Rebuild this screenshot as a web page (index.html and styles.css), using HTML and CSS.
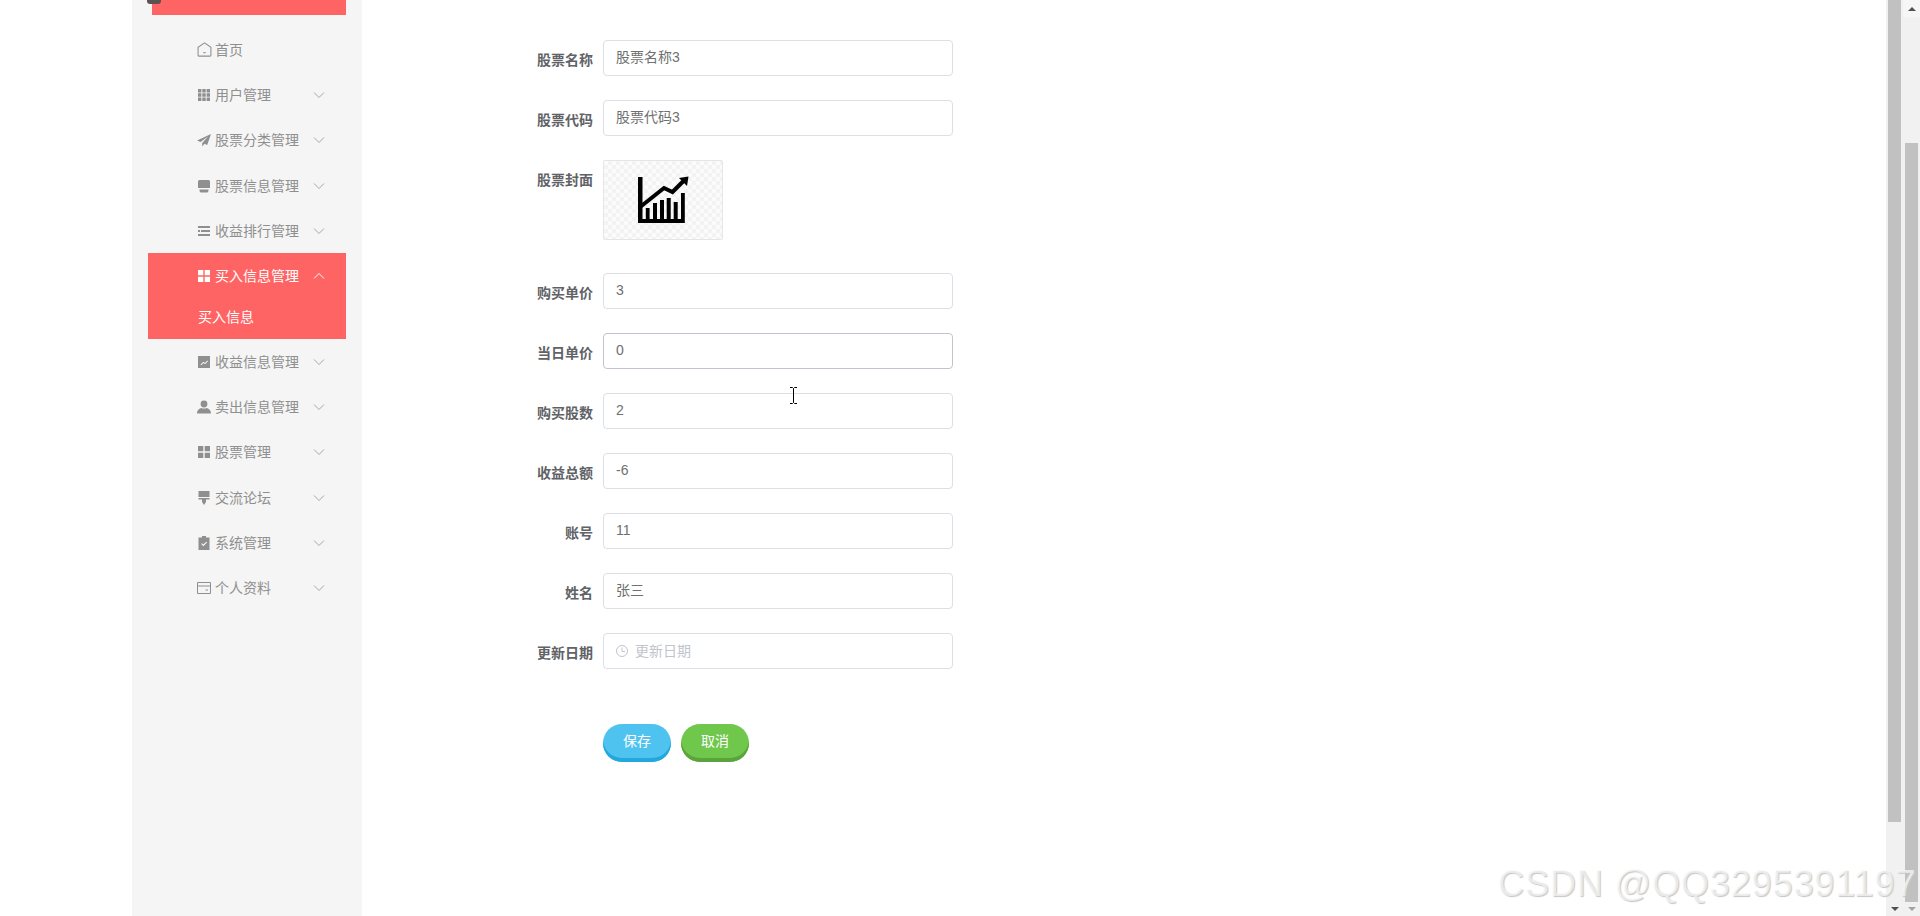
FILE: index.html
```html
<!DOCTYPE html>
<html lang="zh-CN">
<head>
<meta charset="utf-8">
<title>买入信息</title>
<link rel="stylesheet" href="styles.css">
</head>
<body>
<div class="app">
  <aside class="sidebar">
    <div class="side-head"><span class="avatar"></span></div>
    <ul class="menu">
      <li class="item">
        <svg class="ico ico-home" viewBox="0 0 14 14"><path d="M7 .8 1 5v7.400c0 .5.3.8.8.8h10.400c.5 0 .8-.3.8-.8V5z" fill="none" stroke="currentColor" stroke-width="1"/><path d="M5.800 10h2.400" stroke="currentColor" fill="none"/></svg>
        <span class="txt">首页</span>
      </li>
      <li class="item">
        <svg class="ico" viewBox="0 0 14 14"><path d="M1 1h3.400v3.400H1zM5.300 1h3.400v3.400H5.300zM9.600 1H13v3.400H9.600zM1 5.300h3.400v3.400H1zM5.300 5.300h3.400v3.400H5.300zM9.600 5.300H13v3.400H9.600zM1 9.600h3.400V13H1zM5.300 9.600h3.400V13H5.300zM9.600 9.600H13V13H9.600z" fill="currentColor"/></svg>
        <span class="txt">用户管理</span>
        <svg class="chev" viewBox="0 0 12 12"><path d="M1 3.500 6 8.500l5-5" fill="none" stroke="currentColor"/></svg>
      </li>
      <li class="item">
        <svg class="ico" viewBox="0 0 14 14"><path d="M14 1 0 7.500l3.500 1.600L11 3.500 5.200 10v3.500l2.300-2.700 2.700 1.200z" fill="currentColor"/></svg>
        <span class="txt">股票分类管理</span>
        <svg class="chev" viewBox="0 0 12 12"><path d="M1 3.500 6 8.500l5-5" fill="none" stroke="currentColor"/></svg>
      </li>
      <li class="item">
        <svg class="ico" viewBox="0 0 14 14"><path d="M2.500 1h9A1.500 1.500 0 0 1 13 2.500V9H1V2.500A1.500 1.500 0 0 1 2.500 1zM2.500 10.500h9V12l-1 1.500h-7l-1-1.500z" fill="currentColor"/></svg>
        <span class="txt">股票信息管理</span>
        <svg class="chev" viewBox="0 0 12 12"><path d="M1 3.500 6 8.500l5-5" fill="none" stroke="currentColor"/></svg>
      </li>
      <li class="item">
        <svg class="ico" viewBox="0 0 14 14"><path d="M1 2h12v2H1zM4 6h9v2H4zM1 10h12v2H1zM1 6h2v2H1z" fill="currentColor"/></svg>
        <span class="txt">收益排行管理</span>
        <svg class="chev" viewBox="0 0 12 12"><path d="M1 3.500 6 8.500l5-5" fill="none" stroke="currentColor"/></svg>
      </li>
      <li class="group">
        <div class="item active">
          <svg class="ico" viewBox="0 0 14 14"><path d="M1 1h5.300v5.300H1zM7.700 1H13v5.300H7.700zM1 7.700h5.300V13H1zM7.700 7.700H13V13H7.700z" fill="currentColor"/></svg>
          <span class="txt">买入信息管理</span>
          <svg class="chev" viewBox="0 0 12 12"><path d="M1 8.500 6 3.500l5 5" fill="none" stroke="currentColor"/></svg>
        </div>
        <div class="sub">买入信息</div>
      </li>
      <li class="item">
        <svg class="ico" viewBox="0 0 14 14"><path fill-rule="evenodd" d="M1 1h12v12H1zM3.500 9.500l.7.700 2.300-2.200 1.500 1.200 3-3-.7-.7-2.400 2.400-1.500-1.200z" fill="currentColor"/></svg>
        <span class="txt">收益信息管理</span>
        <svg class="chev" viewBox="0 0 12 12"><path d="M1 3.500 6 8.500l5-5" fill="none" stroke="currentColor"/></svg>
      </li>
      <li class="item">
        <svg class="ico" viewBox="0 0 14 14"><circle cx="7" cy="4" r="3.400" fill="currentColor"/><path d="M0 13.500c0-3.500 2.500-5 4.500-5.500.8.800 4.200.8 5 0 2 .5 4.500 2 4.500 5.500z" fill="currentColor"/></svg>
        <span class="txt">卖出信息管理</span>
        <svg class="chev" viewBox="0 0 12 12"><path d="M1 3.500 6 8.500l5-5" fill="none" stroke="currentColor"/></svg>
      </li>
      <li class="item">
        <svg class="ico" viewBox="0 0 14 14"><path d="M1 1h5.300v5.300H1zM7.700 1H13v5.300H7.700zM1 7.700h5.300V13H1zM7.700 7.700H13V13H7.700z" fill="currentColor"/></svg>
        <span class="txt">股票管理</span>
        <svg class="chev" viewBox="0 0 12 12"><path d="M1 3.500 6 8.500l5-5" fill="none" stroke="currentColor"/></svg>
      </li>
      <li class="item">
        <svg class="ico" viewBox="0 0 14 14"><path d="M1.500 0h11v6h-11zM1.500 7h11v1.500h-3.500V11L7 14 5 11V8.500H1.500z" fill="currentColor"/></svg>
        <span class="txt">交流论坛</span>
        <svg class="chev" viewBox="0 0 12 12"><path d="M1 3.500 6 8.500l5-5" fill="none" stroke="currentColor"/></svg>
      </li>
      <li class="item">
        <svg class="ico" viewBox="0 0 14 14"><path fill-rule="evenodd" d="M5 0h4v1.500h3.500V14h-11V1.500H5zM4.200 8l.8-.8 1.400 1.400 2.800-2.800.8.800-3.600 3.600z" fill="currentColor"/></svg>
        <span class="txt">系统管理</span>
        <svg class="chev" viewBox="0 0 12 12"><path d="M1 3.500 6 8.500l5-5" fill="none" stroke="currentColor"/></svg>
      </li>
      <li class="item">
        <svg class="ico" viewBox="0 0 14 14"><path d="M.5 1.500h13v11H.5zM.5 5h13M8.500 9h2.500" fill="none" stroke="currentColor"/></svg>
        <span class="txt">个人资料</span>
        <svg class="chev" viewBox="0 0 12 12"><path d="M1 3.500 6 8.500l5-5" fill="none" stroke="currentColor"/></svg>
      </li>
    </ul>
  </aside>

  <main class="main">
    <form class="form">
      <div class="row"><label class="lbl">股票名称</label><div class="field">股票名称3</div></div>
      <div class="row"><label class="lbl">股票代码</label><div class="field">股票代码3</div></div>
      <div class="row row-img"><label class="lbl">股票封面</label>
        <div class="cover">
          <svg class="cover-art" viewBox="0 0 120 80">
            <path d="M35 17h4.500v42h38.500v-26h3.800v30H35z" fill="#000"/>
            <path d="M42.800 48h3.800v12h-3.800zM50 43H54v17h-4zM57 40h4v20h-4zM63.700 38h4v22h-4zM70.700 42h4v18h-4z" fill="#000"/>
            <path d="M36.500 47.500 61 28l8.500 4 12-12" fill="none" stroke="#000" stroke-width="4"/>
            <path d="M76 18 85.500 16.500 84 26z" fill="#000"/>
          </svg>
        </div>
      </div>
      <div class="row"><label class="lbl">购买单价</label><div class="field">3</div></div>
      <div class="row"><label class="lbl">当日单价</label><div class="field field-hover">0</div></div>
      <div class="row"><label class="lbl">购买股数</label><div class="field">2</div></div>
      <div class="row"><label class="lbl">收益总额</label><div class="field">-6</div></div>
      <div class="row"><label class="lbl">账号</label><div class="field">11</div></div>
      <div class="row"><label class="lbl">姓名</label><div class="field">张三</div></div>
      <div class="row"><label class="lbl">更新日期</label>
        <div class="field field-date">
          <svg class="clock" viewBox="0 0 14 14"><circle cx="7" cy="7" r="5.500" fill="none" stroke="currentColor"/><path d="M7 3.500V7.500h3" fill="none" stroke="currentColor"/></svg>
          <span>更新日期</span>
        </div>
      </div>
      <div class="actions">
        <button type="button" class="btn btn-save">保存</button>
        <button type="button" class="btn btn-cancel">取消</button>
      </div>
    </form>
  </main>

  <div class="bar bar-inner">
    <div class="thumb thumb-inner"></div>
    <div class="bar-fill"></div>
    <div class="arrow-btn"><span class="tri tri-down"></span></div>
  </div>
  <div class="bar bar-outer">
    <div class="arrow-btn arrow-top"><span class="tri tri-up"></span></div>
    <div class="thumb thumb-outer"></div>
    <div class="arrow-btn"><span class="tri tri-down tri-light"></span></div>
  </div>
</div>

<svg class="cursor" viewBox="0 0 9 17"><path d="M1 .5h2.500L4.500 1.500 5.500.5H8M4.500 1.500v14M1 16.500h2.500l1-1 1 1H8" fill="none" stroke="#000"/></svg>
<div class="watermark">CSDN @QQ3295391197</div>
</body>
</html>
```
FILE: styles.css
```css
* { box-sizing: border-box; }
html, body { margin: 0; padding: 0; height: 916px; overflow: hidden; background: #fff; }
body { font-family: "Liberation Sans", "Noto Sans CJK SC", sans-serif; font-size: 14px; color: #606266; }

.app { display: flex; height: 916px; padding-left: 132px; }

.sidebar { flex: 0 0 230px; background: #f5f5f5; position: relative; }
.side-head { height: 15px; margin: 0 16px 0 20px; background: #ff6464; }
.avatar { position: absolute; left: 15px; top: 0; width: 14px; height: 4px; background: #5a5350; border-radius: 0 0 3px 3px; }
.menu { list-style: none; margin: 0; padding: 12.4px 16px 0; color: #8f8f8f; }
.item { display: flex; align-items: center; height: 45.2px; padding-left: 49px; }
.ico { flex: none; width: 14px; height: 14px; margin-right: 4px; }
.ico-home { width: 15px; height: 15px; margin-right: 3px; }
.txt { flex: 1; line-height: 20px; }
.chev { flex: none; width: 12px; height: 12px; margin-right: 21px; color: #a8a8a8; }
.group { background: #ff6464; color: #fff; margin-bottom: 1px; }
.item.active .chev { color: #fff; }
.sub { height: 40px; line-height: 37px; padding-left: 50px; }

.main { flex: 1; padding: 40px 0 0 141px; }
.form { width: 450px; }
.row { display: flex; height: 36px; margin-bottom: 24px; }
.row-img { height: 80px; margin-bottom: 33px; }
.lbl { flex: 0 0 100px; padding-right: 10px; text-align: right; line-height: 40px; height: 40px; font-weight: 700; color: #606266; }
.field { flex: 0 0 350px; height: 36px; line-height: 33px; padding: 0 12px; background: #fff; border: 1px solid #dcdfe6; border-radius: 4px; color: #707070; }
.field-hover { border-color: #c0c4cc; }
.field-date { display: flex; align-items: center; color: #c0c4cc; padding-left: 11px; }
.clock { width: 14px; height: 14px; margin-right: 6px; }
.cover { width: 120px; height: 80px; border: 1px solid #e6e6e6; border-radius: 2px; background: repeating-conic-gradient(#f3f3f3 0 25%, #fbfbfb 0 50%) 0 0 / 8px 8px; }
.cover-art { display: block; width: 120px; height: 80px; margin: -1px; }

.actions { display: flex; gap: 10px; margin: 55px 0 0 100px; }
.btn { width: 68px; height: 38px; padding: 0 0 6px; border: 0; border-radius: 19px; color: #fff; font: inherit; }
.btn-save { background: #4fc3f0; box-shadow: inset 0 -4px 0 #22a8dc; }
.btn-cancel { background: #6fc74c; box-shadow: inset 0 -4px 0 #5aa33d; }

.bar { display: flex; flex-direction: column; height: 916px; background: #f1f1f1; }
.bar-inner { flex: 0 0 17px; padding-left: 2px; }
.bar-outer { flex: 0 0 17px; }
.bar-fill { flex: 1; }
.thumb { width: 13px; background: #c1c1c1; }
.thumb-inner { height: 822px; }
.thumb-outer { height: 759px; margin: 126px 0 0 2px; }
.bar-outer .arrow-btn:last-child { margin-top: auto; }
.arrow-btn { flex: none; display: flex; align-items: center; justify-content: center; width: 17px; height: 14px; }
.bar-inner .arrow-btn { margin-left: -2px; }
.arrow-top { height: 17px; background: #f6f6f6; }
.tri { width: 0; height: 0; border-left: 4px solid transparent; border-right: 4px solid transparent; }
.tri-up { border-bottom: 4px solid #505050; }
.tri-down { border-top: 4px solid #505050; }
.tri-light { border-top-color: #a3a3a3; }

.cursor { position: absolute; left: 789px; top: 387px; width: 9px; height: 17px; }
.watermark { position: absolute; left: 1498px; top: 863px; font-size: 36px; letter-spacing: .9px; line-height: 42px; white-space: nowrap; color: rgba(250, 250, 250, .7); text-shadow: 1px 1px 1px #c6c6c6; }
```
